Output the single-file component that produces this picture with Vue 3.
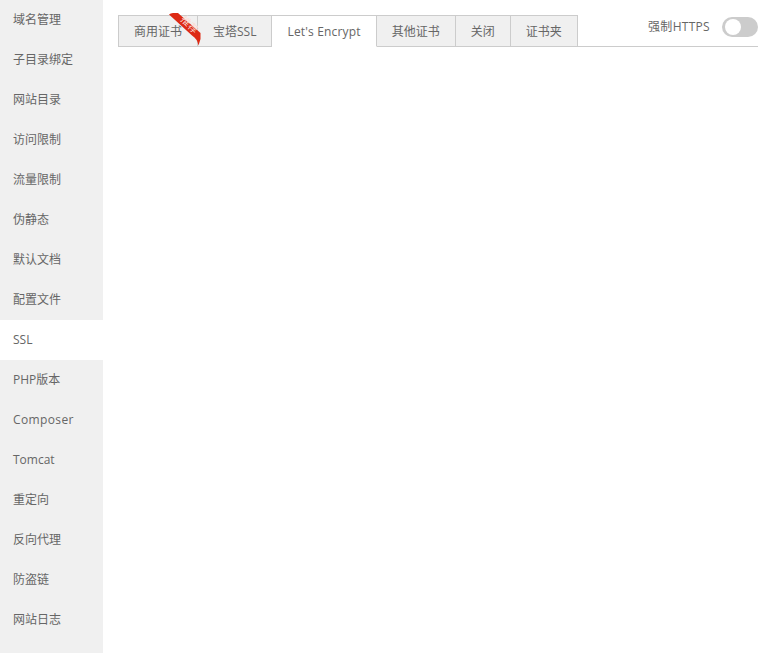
<script setup>
const menu = ['域名管理','子目录绑定','网站目录','访问限制','流量限制','伪静态','默认文档','配置文件','SSL','PHP版本','Composer','Tomcat','重定向','反向代理','防盗链','网站日志']
const tabs = ['商用证书','宝塔SSL',"Let's Encrypt",'其他证书','关闭','证书夹']
</script>

<template>
  <div class="page">
    <aside class="side">
      <div v-for="m in menu" :key="m" class="item" :class="{ on: m === 'SSL', wide: m === 'Composer' }">{{ m }}</div>
    </aside>
    <main class="main">
      <div class="bar">
        <div v-for="(t, i) in tabs" :key="t" class="tab" :class="{ active: i === 2, first: i === 0 }">
          {{ t }}
          <span v-if="i === 0" class="ribbon">
            <svg class="rsvg" width="34" height="34" viewBox="0 0 34 34">
              <path d="M1 1.5 Q2.5 0 5 0 L10 0 L32.5 20 L32.5 26 L30.5 32.5 Q29.5 26 24 22.5 Z" fill="#dd2a14"/>
              <text x="0" y="0" transform="translate(19 14) rotate(45)" class="rtxt">推荐</text>
            </svg>
          </span>
        </div>
        <div class="force">
          <span class="flabel">强制HTTPS</span>
          <span class="toggle"><span class="knob"></span></span>
        </div>
      </div>
    </main>
  </div>
</template>

<style>
html, body { margin: 0; background: #fff; }
</style>

<style scoped>
.page {
  display: flex;
  width: 771px;
  height: 653px;
  overflow: hidden;
  font-family: "Open Sans", "Noto Sans CJK SC", sans-serif;
  font-size: 12px;
  color: #666;
}
.side { width: 103px; height: 653px; background: #f0f0f0; flex: none; }
.item { height: 40px; line-height: 39px; padding-left: 13px; color: #666; }
.item.on { background: #fff; }
.item.wide { letter-spacing: 0.37px; }
.main { flex: 1; padding: 15px 13px 0 15px; min-width: 0; }
.bar {
  display: flex;
  height: 32px;
  box-sizing: border-box;
  border-bottom: 1px solid #ccc;
  position: relative;
}
.tab {
  position: relative;
  height: 32px;
  box-sizing: border-box;
  padding: 0 15px;
  line-height: 31px;
  background: #f0f0f0;
  border: 1px solid #ccc;
  border-left-width: 0;
  white-space: nowrap;
  color: #666;
}
.tab.first { border-left-width: 1px; }
.tab.active { background: #fff; border-bottom-color: #fff; letter-spacing: 0.17px; }
.ribbon { position: absolute; left: 49px; top: -3px; width: 34px; height: 34px; line-height: 0; z-index: 2; letter-spacing: 0; }
.rsvg { overflow: visible; display: block; }
.rtxt { font-size: 10px; fill: #fbdcd5; text-anchor: middle; font-family: "Noto Sans CJK SC", sans-serif; }
.force { margin-left: auto; display: flex; align-items: flex-start; }
.flabel { line-height: 24px; margin-right: 12px; color: #666; letter-spacing: 0.3px; }
.toggle {
  width: 36px;
  height: 20px;
  margin-top: 2px;
  border-radius: 10px;
  background: #ccc;
  display: block;
  box-sizing: border-box;
  padding: 2px 3px;
}
.knob { display: block; width: 16px; height: 16px; border-radius: 50%; background: #fff; }
</style>
